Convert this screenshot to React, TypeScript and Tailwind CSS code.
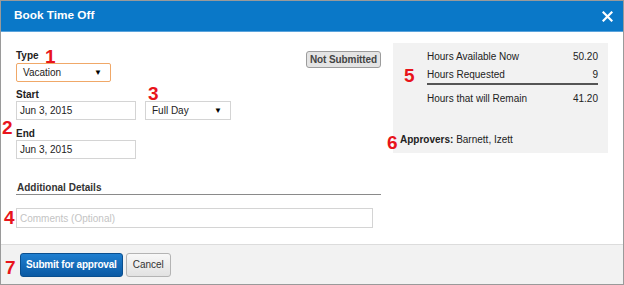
import React from "react";

const font = { fontFamily: '"Liberation Sans", Arial, sans-serif' };

function Mark({ n, className }: { n: string; className: string }) {
  return (
    <span className={`absolute text-[19px] leading-none font-bold text-[#e8141b] ${className}`}>{n}</span>
  );
}

function Caret() {
  return <span className="text-[8px] leading-none text-black">▼</span>;
}

export default function App() {
  return (
    <div style={font} className="relative w-[624px] h-[285px] bg-white border border-[#9a9a9a] flex flex-col text-[10px] text-[#222]">
      <div className="h-[31px] bg-[#0a78c8] flex items-center justify-between pl-[13px] pr-[10px] border-b border-[#5aa3dc]">
        <span className="text-white font-bold text-[11.8px]">Book Time Off</span>
        <svg width="11" height="11" viewBox="0 0 11 11">
          <path d="M1.5 1.5 L9.5 9.5 M9.5 1.5 L1.5 9.5" stroke="#fff" strokeWidth="2.2" strokeLinecap="square" />
        </svg>
      </div>

      <div className="flex-1 flex pl-[15px]">
        <div className="w-[365px] pt-[18px]">
          <div className="flex justify-between">
            <div>
              <div className="font-bold leading-[12px] mb-[1px]">Type</div>
              <div className="w-[95px] h-[19px] border border-[#f0a868] rounded-[2px] flex items-center justify-between pl-[6px] pr-[8px]">
                <span>Vacation</span>
                <Caret />
              </div>
            </div>
            <div className="mt-[1px] h-[17px] px-[3px] flex items-center bg-[#e4e4e4] border border-[#9c9c9c] rounded-[3px] font-bold text-[#444] tracking-[-0.1px]">Not Submitted</div>
          </div>

          <div className="mt-[7px] font-bold leading-[12px]">Start</div>
          <div className="flex gap-[9px]">
            <div className="w-[120px] h-[19px] border border-[#d4d4d4] flex items-center pl-[3px]">Jun 3, 2015</div>
            <div className="w-[86px] h-[19px] border border-[#d4d4d4] flex items-center justify-between pl-[6px] pr-[8px]">
              <span>Full Day</span>
              <Caret />
            </div>
          </div>

          <div className="mt-[8px] font-bold leading-[12px]">End</div>
          <div className="w-[120px] h-[19px] border border-[#d4d4d4] flex items-center pl-[3px]">Jun 3, 2015</div>

          <div className="mt-[23px] font-bold leading-[11px] text-[#333] pb-[1px] border-b border-[#8a8a8a] pl-[1px]">Additional Details</div>
          <div className="mt-[13px] w-[357px] h-[20px] border border-[#d4d4d4] flex items-center pl-[3px] text-[#c4c4c4]">Comments (Optional)</div>
        </div>

        <div className="ml-[12px] mt-[11px] w-[215px] h-[110px] bg-[#f2f2f2] flex flex-col pl-[34px] pr-[10px] pt-[7px]">
          <div className="flex justify-between leading-[13px]"><span>Hours Available Now</span><span>50.20</span></div>
          <div className="flex justify-between leading-[13px] mt-[5px] pb-[2px] border-b-2 border-[#555]"><span>Hours Requested</span><span>9</span></div>
          <div className="flex justify-between leading-[13px] mt-[7px]"><span>Hours that will Remain</span><span>41.20</span></div>
          <div className="mt-[28px] -ml-[27px] leading-[13px]"><span className="font-bold">Approvers:</span> Barnett, Izett</div>
        </div>
      </div>

      <div className="h-[40px] bg-[#f2f2f2] border-t border-[#dcdcdc] flex items-center pl-[19px] gap-[3px]">
        <div className="h-[24px] px-[5px] flex items-center rounded-[3px] bg-gradient-to-b from-[#1f7fd0] to-[#0b5aa4] border border-[#0a4f8f] text-white font-bold tracking-[-0.2px]">Submit for approval</div>
        <div className="h-[24px] px-[6px] flex items-center rounded-[3px] bg-gradient-to-b from-[#f8f8f8] to-[#e2e2e2] border border-[#b4b4b4] text-[#333]">Cancel</div>
      </div>

      <Mark n="1" className="left-[44px] top-[46px]" />
      <Mark n="3" className="left-[147px] top-[83px]" />
      <Mark n="2" className="left-[1px] top-[117px]" />
      <Mark n="4" className="left-[3px] top-[207px]" />
      <Mark n="7" className="left-[4px] top-[257px]" />
      <Mark n="5" className="left-[403px] top-[65px]" />
      <Mark n="6" className="left-[386px] top-[132px]" />
    </div>
  );
}
